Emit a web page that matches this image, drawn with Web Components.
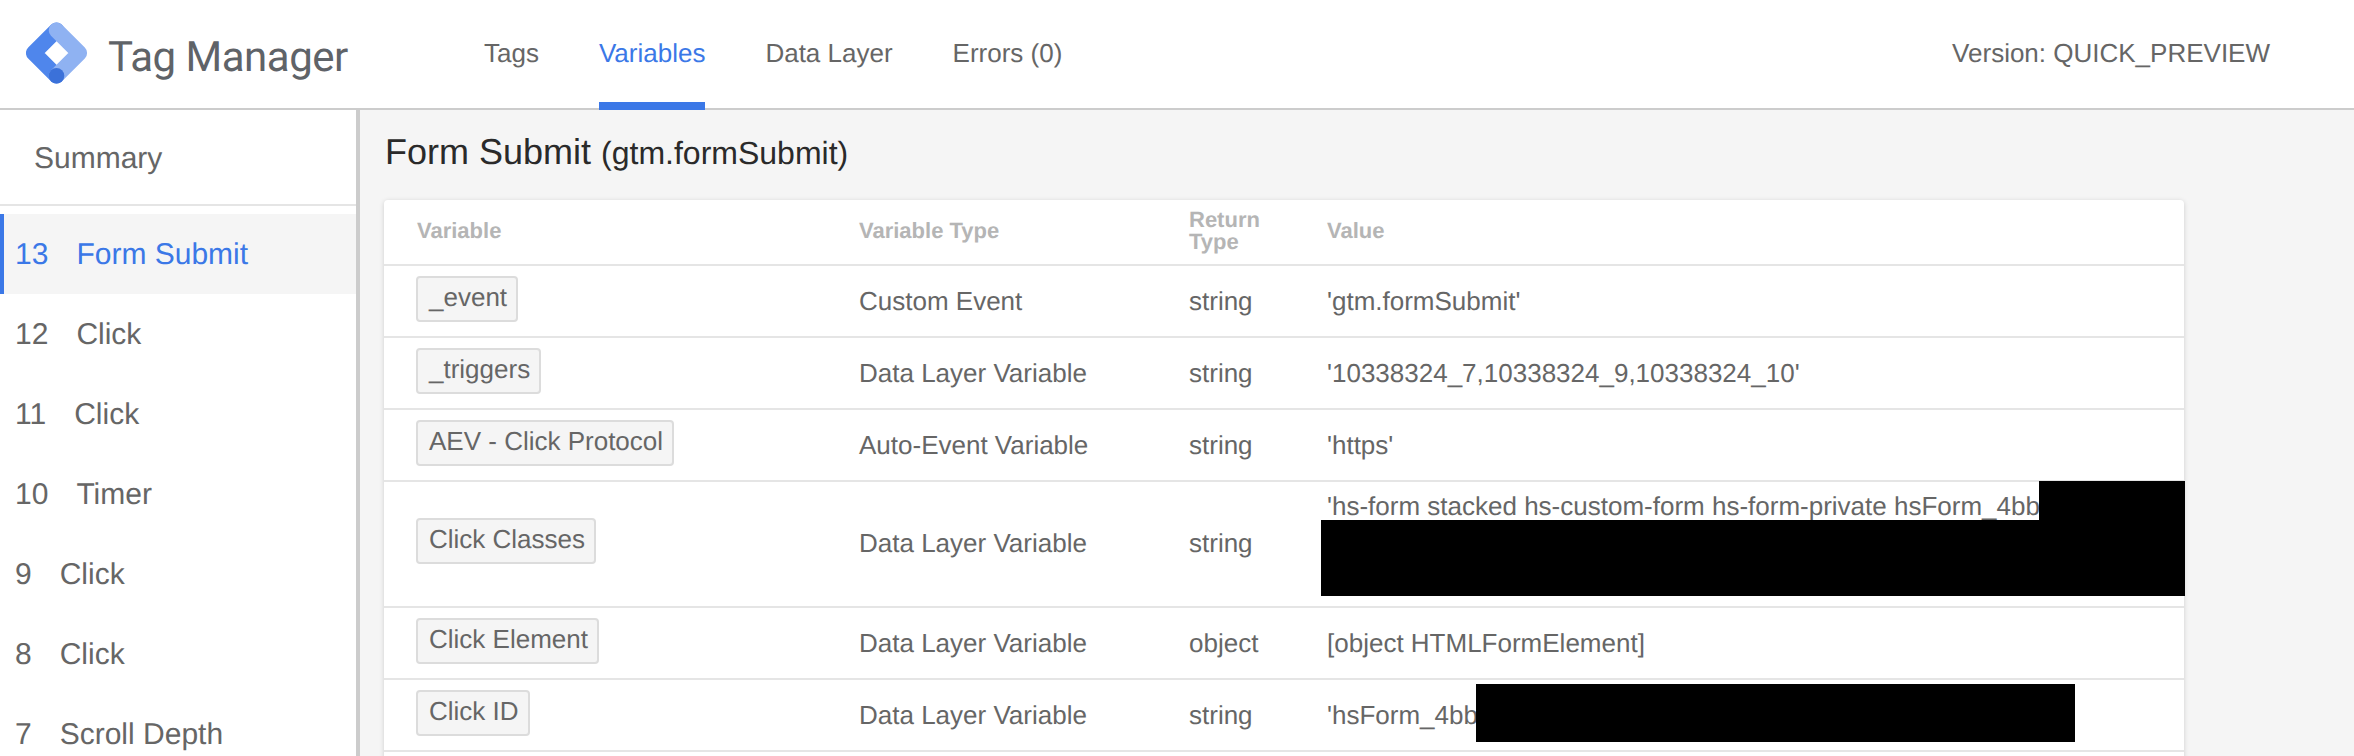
<!DOCTYPE html>
<html>
<head>
<meta charset="utf-8">
<title>Tag Manager</title>
<style>
  html, body { margin: 0; height: 756px; overflow: hidden; }
  body { font-family: "Liberation Sans", Arial, sans-serif; color: #666; background: #f5f5f5; text-rendering: geometricPrecision; }
</style>
</head>
<body>
<gtm-app>
  <gtm-header slot="header">
    <nav-tab>Tags</nav-tab>
    <nav-tab active>Variables</nav-tab>
    <nav-tab>Data Layer</nav-tab>
    <nav-tab>Errors (0)</nav-tab>
    <span slot="version">Version: QUICK_PREVIEW</span>
  </gtm-header>
  <gtm-sidebar slot="sidebar">
    <side-item num="13" active>Form Submit</side-item>
    <side-item num="12">Click</side-item>
    <side-item num="11">Click</side-item>
    <side-item num="10">Timer</side-item>
    <side-item num="9">Click</side-item>
    <side-item num="8">Click</side-item>
    <side-item num="7">Scroll Depth</side-item>
  </gtm-sidebar>
  <var-panel name="Form Submit" event="(gtm.formSubmit)">
    <var-row type="Custom Event" ret="string"><var-chip slot="name">_event</var-chip>'gtm.formSubmit'</var-row>
    <var-row type="Data Layer Variable" ret="string"><var-chip slot="name">_triggers</var-chip>'10338324_7,10338324_9,10338324_10'</var-row>
    <var-row type="Auto-Event Variable" ret="string"><var-chip slot="name">AEV - Click Protocol</var-chip>'https'</var-row>
    <var-row type="Data Layer Variable" ret="string" tall><var-chip slot="name">Click Classes</var-chip>'hs-form stacked hs-custom-form hs-form-private hsForm_4bb
      <redact-box style="left:1655px;top:-1px;width:146px;height:40px"></redact-box>
      <redact-box style="left:937px;top:38px;width:864px;height:76px"></redact-box>
    </var-row>
    <var-row type="Data Layer Variable" ret="object"><var-chip slot="name">Click Element</var-chip>[object HTMLFormElement]</var-row>
    <var-row type="Data Layer Variable" ret="string"><var-chip slot="name">Click ID</var-chip>'hsForm_4bb
      <redact-box style="left:1092px;top:4px;width:599px;height:58px"></redact-box>
    </var-row>
    <var-row></var-row>
  </var-panel>
</gtm-app>

<script>
function shadow(el, html) {
  el.attachShadow({mode: 'open'});
  el.shadowRoot.innerHTML = html;
}

class GtmApp extends HTMLElement {
  constructor() {
    super();
    shadow(this, `
      <style>
        :host { display: grid; grid-template: 110px 646px / 360px 1fr; height: 756px; overflow: hidden; }
        .top { grid-column: 1 / 3; }
      </style>
      <div class="top"><slot name="header"></slot></div>
      <slot name="sidebar"></slot>
      <slot></slot>
    `);
  }
}

class GtmHeader extends HTMLElement {
  constructor() {
    super();
    shadow(this, `
      <style>
        :host { display: flex; align-items: stretch; height: 110px; box-sizing: border-box; background: #fff; border-bottom: 2px solid #ccc; }
        .logo { display: flex; align-items: center; width: 484px; flex: none; padding-left: 26px; box-sizing: border-box; }
        svg { width: 62px; height: 63px; margin-top: -2px; flex: none; }
        .word { font: 42px Roboto, sans-serif; color: #5f6368; margin-left: 20px; margin-top: 6px; letter-spacing: -.5px; }
        nav { display: flex; gap: 60px; flex: 1; margin-bottom: -2px; }
        .version { font-size: 26px; line-height: 106px; padding-right: 84px; }
      </style>
      <div class="logo">
        <svg viewBox="26 23 62 63" fill="none" stroke-linecap="round" stroke-linejoin="round" stroke-width="15.6">
          <path stroke="#4f86ec" d="M56.5 31.2 33.7 54 56.5 76.8"/>
          <path stroke="#8fb2f2" d="M56.5 31.2 79.3 54 56.5 76.8"/>
          <circle cx="56.5" cy="76.8" r="7.8" fill="#3b71d9" stroke="none"/>
        </svg>
        <span class="word">Tag Manager</span>
      </div>
      <nav><slot></slot></nav>
      <div class="version"><slot name="version"></slot></div>
    `);
  }
}

class NavTab extends HTMLElement {
  constructor() {
    super();
    shadow(this, `
      <style>
        :host { display: block; font-size: 26px; line-height: 106px; height: 110px; box-sizing: border-box; }
        :host([active]) { color: #3b78e7; border-bottom: 8px solid #3b78e7; }
      </style>
      <slot></slot>
    `);
  }
}

class GtmSidebar extends HTMLElement {
  constructor() {
    super();
    shadow(this, `
      <style>
        :host { display: block; background: #fff; border-right: 4px solid #ccc; overflow: hidden; }
        .summary { font-size: 30px; line-height: 90px; padding: 4px 0 0 34px; border-bottom: 2px solid #e5e5e5; margin-bottom: 8px; }
      </style>
      <div class="summary">Summary</div>
      <slot></slot>
    `);
  }
}

class SideItem extends HTMLElement {
  constructor() {
    super();
    shadow(this, `
      <style>
        :host { display: block; height: 80px; font-size: 30px; line-height: 82px; padding-left: 15px; box-sizing: border-box; white-space: nowrap; }
        :host([active]) { color: #3b78e7; background: #f5f5f5; border-left: 4px solid #3b78e7; padding-left: 11px; }
        .num { margin-right: 28px; }
      </style>
      <span class="num">${this.getAttribute('num')}</span><slot></slot>
    `);
  }
}

class VarPanel extends HTMLElement {
  constructor() {
    super();
    shadow(this, `
      <style>
        :host { display: block; padding-left: 24px; overflow: hidden; }
        h1 { margin: 0; height: 90px; font-size: 36px; font-weight: 400; line-height: 83px; color: #2a2a2a; padding-left: 1px; }
        small { font-size: 32px; }
        .card { width: 1800px; background: #fff; border-radius: 4px; box-shadow: 0 1px 5px rgba(0,0,0,.16); padding-bottom: 40px; }
        .head { display: grid; grid-template-columns: 475px 330px 138px 1fr; align-items: center; height: 64px; box-sizing: border-box; padding-bottom: 2px; border-bottom: 2px solid #e5e5e5; font-size: 22px; font-weight: 700; line-height: 22px; color: #b5b5b5; box-sizing: content-box; height: 62px; }
        .head div:first-child { padding-left: 33px; }
      </style>
      <h1>${this.getAttribute('name')} <small>${this.getAttribute('event')}</small></h1>
      <div class="card">
        <div class="head">
          <div>Variable</div><div>Variable Type</div><div>Return<br>Type</div><div>Value</div>
        </div>
        <slot></slot>
      </div>
    `);
  }
}

class VarRow extends HTMLElement {
  constructor() {
    super();
    shadow(this, `
      <style>
        :host { display: grid; grid-template-columns: 475px 330px 138px 1fr; align-items: center; position: relative; min-height: 70px; border-bottom: 2px solid #e5e5e5; font-size: 26px; line-height: 38px; }
        :host([tall]) { min-height: 124px; }
        .name { padding-left: 32px; }
        :host([tall]) div { padding-bottom: 2px; }
        :host([tall]) .value { align-self: start; padding: 5px 0 0; }
      </style>
      <div class="name"><slot name="name"></slot></div>
      <div>${this.getAttribute('type') || ''}</div>
      <div>${this.getAttribute('ret') || ''}</div>
      <div class="value"><slot></slot></div>
    `);
  }
}

class VarChip extends HTMLElement {
  constructor() {
    super();
    shadow(this, `
      <style>
        :host { display: inline-block; height: 46px; box-sizing: border-box; margin-bottom: 4px; vertical-align: top; padding: 0 9px 0 11px; font-size: 26px; line-height: 38px; background: #f5f5f5; border: 2px solid #dcdcdc; border-radius: 4px; }
      </style>
      <slot></slot>
    `);
  }
}

// black bars laid over the hidden values
class RedactBox extends HTMLElement {
  constructor() {
    super();
    shadow(this, `
      <style>
        :host { display: block; position: absolute; background: #000; }
      </style>
    `);
  }
}

customElements.define('gtm-app', GtmApp);
customElements.define('gtm-header', GtmHeader);
customElements.define('nav-tab', NavTab);
customElements.define('gtm-sidebar', GtmSidebar);
customElements.define('side-item', SideItem);
customElements.define('var-panel', VarPanel);
customElements.define('var-row', VarRow);
customElements.define('var-chip', VarChip);
customElements.define('redact-box', RedactBox);
</script>
</body>
</html>
